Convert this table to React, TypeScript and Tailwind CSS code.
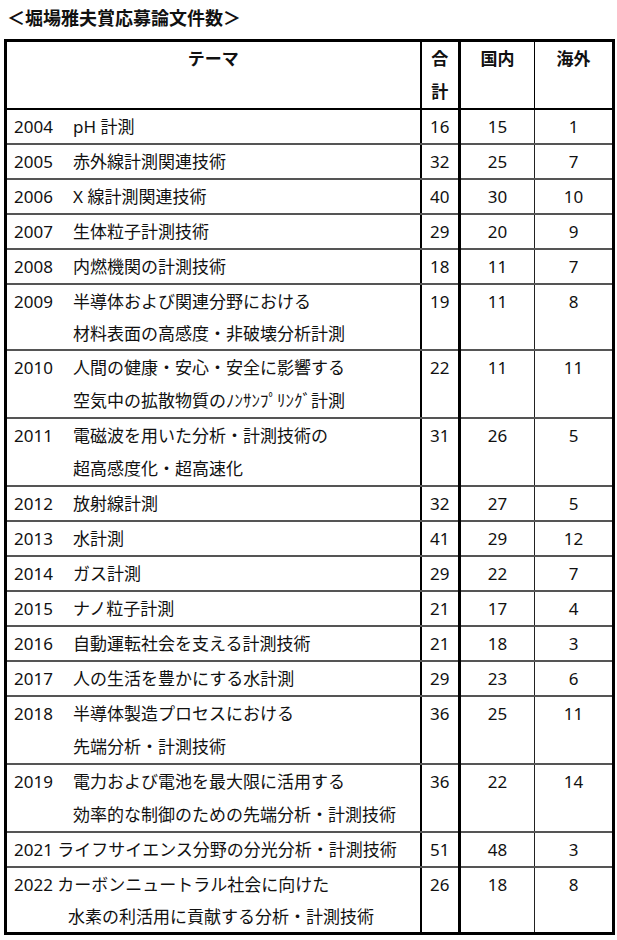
type Row = {
  year: string
  lines: string[]
  total: number
  domestic: number
  overseas: number
  tight?: boolean
  short?: boolean
}

const ROWS: Row[] = [
  { year: '2004', lines: ['pH 計測'], total: 16, domestic: 15, overseas: 1 },
  { year: '2005', lines: ['赤外線計測関連技術'], total: 32, domestic: 25, overseas: 7 },
  { year: '2006', lines: ['X 線計測関連技術'], total: 40, domestic: 30, overseas: 10 },
  { year: '2007', lines: ['生体粒子計測技術'], total: 29, domestic: 20, overseas: 9 },
  { year: '2008', lines: ['内燃機関の計測技術'], total: 18, domestic: 11, overseas: 7 },
  { year: '2009', lines: ['半導体および関連分野における', '材料表面の高感度・非破壊分析計測'], total: 19, domestic: 11, overseas: 8, short: true },
  { year: '2010', lines: ['人間の健康・安心・安全に影響する', '空気中の拡散物質のﾉﾝｻﾝﾌﾟﾘﾝｸﾞ計測'], total: 22, domestic: 11, overseas: 11 },
  { year: '2011', lines: ['電磁波を用いた分析・計測技術の', '超高感度化・超高速化'], total: 31, domestic: 26, overseas: 5 },
  { year: '2012', lines: ['放射線計測'], total: 32, domestic: 27, overseas: 5 },
  { year: '2013', lines: ['水計測'], total: 41, domestic: 29, overseas: 12 },
  { year: '2014', lines: ['ガス計測'], total: 29, domestic: 22, overseas: 7 },
  { year: '2015', lines: ['ナノ粒子計測'], total: 21, domestic: 17, overseas: 4 },
  { year: '2016', lines: ['自動運転社会を支える計測技術'], total: 21, domestic: 18, overseas: 3 },
  { year: '2017', lines: ['人の生活を豊かにする水計測'], total: 29, domestic: 23, overseas: 6 },
  { year: '2018', lines: ['半導体製造プロセスにおける', '先端分析・計測技術'], total: 36, domestic: 25, overseas: 11 },
  { year: '2019', lines: ['電力および電池を最大限に活用する', '効率的な制御のための先端分析・計測技術'], total: 36, domestic: 22, overseas: 14 },
  { year: '2021', lines: ['ライフサイエンス分野の分光分析・計測技術'], total: 51, domestic: 48, overseas: 3, tight: true },
  { year: '2022', lines: ['カーボンニュートラル社会に向けた', '水素の利活用に貢献する分析・計測技術'], total: 26, domestic: 18, overseas: 8, tight: true, short: true },
]

// ─── Theme cell ───────────────────────────────────────────────────────────────

function ThemeCell({ row }: { row: Row }) {
  const second = row.short ? 'leading-[31px]' : ''

  if (row.tight) {
    return (
      <div>
        <div className="whitespace-nowrap">
          {row.year} {row.lines[0]}
        </div>
        {row.lines[1] && <div className={`pl-[54px] whitespace-nowrap ${second}`}>{row.lines[1]}</div>}
      </div>
    )
  }

  return (
    <div className="flex">
      <span className="w-[59px] shrink-0">{row.year}</span>
      <div>
        {row.lines.map((line, i) => (
          <div key={line} className={`whitespace-nowrap ${i > 0 ? second : ''}`}>{line}</div>
        ))}
      </div>
    </div>
  )
}

// ─── Page ─────────────────────────────────────────────────────────────────────

export default function App() {
  return (
    <div
      className="min-h-screen bg-white text-[#111] pl-[4px]"
      style={{ fontFamily: '"Noto Sans", "Noto Sans CJK JP", sans-serif' }}
    >
      <h1 className="pt-[6px] pl-[3px] mb-[8px] text-[18px] leading-[25px] font-bold">
        ＜堀場雅夫賞応募論文件数＞
      </h1>

      <table className="w-[608px] table-fixed border-collapse border-[3px] border-black text-[17px] leading-[33px]">
        <colgroup>
          <col className="w-[415px]" />
          <col className="w-[39px]" />
          <col className="w-[75px]" />
          <col className="w-[79px]" />
        </colgroup>
        <thead>
          <tr className="align-top font-bold">
            <th className="border-b-2 border-r-2 border-black font-bold text-center">テーマ</th>
            <th className="border-b-2 border-r-[3px] border-black font-bold text-center">
              <div>合</div>
              <div>計</div>
            </th>
            <th className="border-b-2 border-r border-black font-bold text-center">国内</th>
            <th className="border-b-2 border-black font-bold text-center">海外</th>
          </tr>
        </thead>
        <tbody>
          {ROWS.map((row) => (
            <tr key={row.year} className="align-top">
              <td className="border-b-2 border-b-[#555] border-r-2 border-r-black pl-[7px]">
                <ThemeCell row={row} />
              </td>
              <td className="border-b-2 border-b-[#555] border-r-[3px] border-r-black text-center">{row.total}</td>
              <td className="border-b-2 border-b-[#555] border-r border-r-[#222] text-center">{row.domestic}</td>
              <td className="border-b-2 border-b-[#555] text-center">{row.overseas}</td>
            </tr>
          ))}
        </tbody>
      </table>
    </div>
  )
}
